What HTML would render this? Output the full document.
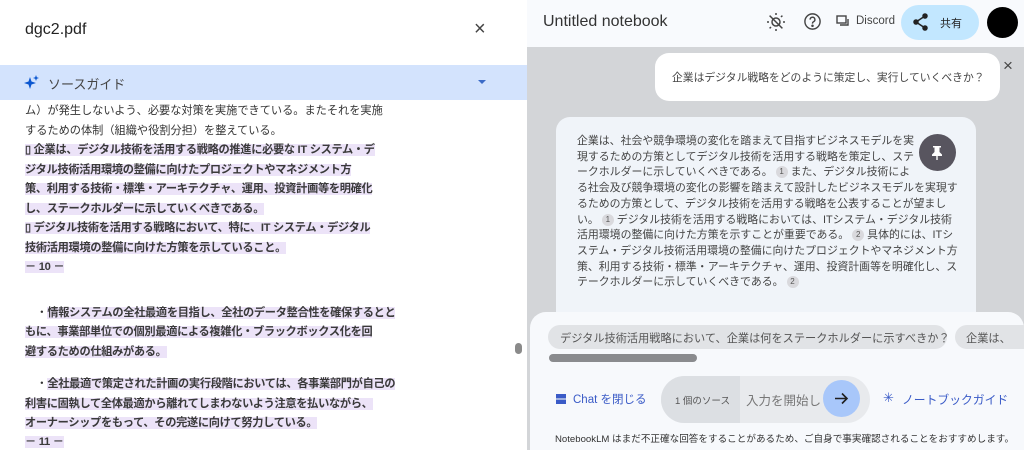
<!DOCTYPE html>
<html><head><meta charset="utf-8"><style>
*{margin:0;padding:0;box-sizing:border-box}
body{width:1024px;height:450px;overflow:hidden;position:relative;background:#fff;font-family:"Liberation Sans","Noto Sans CJK JP",sans-serif;color:#1f1f1f}
.a{position:absolute;white-space:nowrap}
.l{position:absolute;left:25px;font-size:11.2px;color:#333;line-height:19.5px;white-space:nowrap}
.h{background:#ece3f8;font-weight:bold;color:#3a3a3a;letter-spacing:-0.3px}
.r{font-size:10.9px;color:#444;line-height:15.7px}
.n{display:inline-block;width:12px;height:12px;border-radius:6px;background:#d9d9dd;font-size:8px;text-align:center;line-height:12px;color:#555;margin:0 3px;vertical-align:1px}
</style></head><body>
<div class="a" style="left:25px;top:21px;font-size:16px;color:#222">dgc2.pdf</div>
<div class="a" style="left:474px;top:18px;font-size:20px;color:#444">×</div>
<div class="a" style="left:0;top:65px;width:527px;height:35px;background:#d3e3fd"></div>
<svg class="a" style="left:24px;top:74px" width="16" height="16" viewBox="0 0 16 16"><path d="M6 3L7.5 7.5 12 9 7.5 10.5 6 15 4.5 10.5 0 9 4.5 7.5Z" fill="#0b57d0"/><path d="M12 1l.8 2.2L15 4l-2.2.8L12 7l-.8-2.2L9 4l2.2-.8Z" fill="#0b57d0"/></svg>
<div class="a" style="left:48px;top:74px;font-size:13px;color:#444">ソースガイド</div>
<div class="a" style="left:478px;top:80px;width:0;height:0;border-left:4px solid transparent;border-right:4px solid transparent;border-top:4px solid #3b6bc7"></div>

<div class="l" style="top:102px">ム）が発生しないよう、必要な対策を実施できている。またそれを実施</div>
<div class="l" style="top:122px">するための体制（組織や役割分担）を整えている。</div>
<div class="l" style="top:141px"><span class="h">▯ 企業は、デジタル技術を活用する戦略の推進に必要な IT システム・デ</span></div>
<div class="l" style="top:161px"><span class="h">ジタル技術活用環境の整備に向けたプロジェクトやマネジメント方</span></div>
<div class="l" style="top:180px"><span class="h">策、利用する技術・標準・アーキテクチャ、運用、投資計画等を明確化</span></div>
<div class="l" style="top:200px"><span class="h">し、ステークホルダーに示していくべきである。</span></div>
<div class="l" style="top:219px"><span class="h">▯ デジタル技術を活用する戦略において、特に、IT システム・デジタル</span></div>
<div class="l" style="top:239px"><span class="h">技術活用環境の整備に向けた方策を示していること。</span></div>
<div class="l" style="top:258px"><span class="h">－ 10 －</span></div>
<div class="l" style="top:304px">　・<span class="h">情報システムの全社最適を目指し、全社のデータ整合性を確保するとと</span></div>
<div class="l" style="top:323px"><span class="h">もに、事業部単位での個別最適による複雑化・ブラックボックス化を回</span></div>
<div class="l" style="top:343px"><span class="h">避するための仕組みがある。</span></div>
<div class="l" style="top:375px">　・<span class="h">全社最適で策定された計画の実行段階においては、各事業部門が自己の</span></div>
<div class="l" style="top:395px"><span class="h">利害に固執して全体最適から離れてしまわないよう注意を払いながら、</span></div>
<div class="l" style="top:414px"><span class="h">オーナーシップをもって、その完遂に向けて努力している。</span></div>
<div class="l" style="top:433px"><span class="h">－ 11 －</span></div>
<div class="a" style="left:515px;top:343px;width:7px;height:11px;border-radius:4px;background:#8a8a8a"></div>

<div class="a" style="left:527px;top:0;width:497px;height:450px;background:#d3d5d8"></div>
<div class="a" style="left:527px;top:0;width:497px;height:47px;background:#f8fafd"></div>
<div class="a" style="left:543px;top:13px;font-size:16px;color:#333">Untitled notebook</div>
<svg class="a" style="left:766px;top:12px" width="20" height="20" viewBox="0 0 20 20" fill="none" stroke="#444" stroke-width="1.5"><circle cx="10" cy="10" r="4"/><path d="M10 1v2M10 17v2M1 10h2M17 10h2M3.6 3.6l1.4 1.4M15 15l1.4 1.4M3.6 16.4L5 15M15 5l1.4-1.4M4 4l12 12"/></svg>
<svg class="a" style="left:803px;top:12px" width="19" height="19" viewBox="0 0 20 20" fill="none" stroke="#444" stroke-width="1.5"><circle cx="10" cy="10" r="8"/><path d="M7.5 8a2.5 2.5 0 1 1 3.5 2.3c-.7.3-1 .8-1 1.5v.5"/><circle cx="10" cy="14.5" r=".6" fill="#444"/></svg>
<svg class="a" style="left:836px;top:15px" width="14" height="13" viewBox="0 0 14 13" fill="none" stroke="#444" stroke-width="1.4"><rect x="1" y="1" width="9" height="7"/><path d="M4 10h8V4"/></svg>
<div class="a" style="left:856px;top:15px;font-size:11.5px;color:#444">Discord</div>
<div class="a" style="left:901px;top:5px;width:78px;height:35px;border-radius:18px;background:#c2e7ff"></div>
<svg class="a" style="left:913px;top:13px" width="16" height="18" viewBox="0 0 16 18" fill="#222" stroke="#222" stroke-width="1.5"><circle cx="12" cy="3" r="2"/><circle cx="3" cy="9" r="2"/><circle cx="12" cy="15" r="2"/><path d="M12 3L3 9l9 6" fill="none"/></svg>
<div class="a" style="left:940px;top:15px;font-size:11px;color:#222">共有</div>
<div class="a" style="left:987px;top:7px;width:31px;height:31px;border-radius:50%;background:#000"></div>

<div class="a" style="left:655px;top:53px;width:345px;height:48px;border-radius:14px;background:#fff"></div>
<div class="a" style="left:672px;top:69px;font-size:10.8px;color:#444">企業はデジタル戦略をどのように策定し、実行していくべきか？</div>
<div class="a" style="left:1003px;top:56px;font-size:17px;color:#444">×</div>

<div class="a" style="left:556px;top:117px;width:420px;height:210px;border-radius:14px;background:#f0f4f9"></div>
<div class="a r" style="left:577px;top:134px">企業は、社会や競争環境の変化を踏まえて目指すビジネスモデルを実<br>現するための方策としてデジタル技術を活用する戦略を策定し、ステ<br>ークホルダーに示していくべきである。<span class="n">1</span>また、デジタル技術によ<br>る社会及び競争環境の変化の影響を踏まえて設計したビジネスモデルを実現す<br>るための方策として、デジタル技術を活用する戦略を公表することが望まし<br>い。<span class="n">1</span>デジタル技術を活用する戦略においては、ITシステム・デジタル技術<br>活用環境の整備に向けた方策を示すことが重要である。<span class="n">2</span>具体的には、ITシ<br>ステム・デジタル技術活用環境の整備に向けたプロジェクトやマネジメント方<br>策、利用する技術・標準・アーキテクチャ、運用、投資計画等を明確化し、ス<br>テークホルダーに示していくべきである。<span class="n">2</span></div>
<div class="a" style="left:919px;top:134px;width:37px;height:37px;border-radius:50%;background:#58555f"></div>
<svg class="a" style="left:930px;top:145px" width="14" height="15" viewBox="0 0 14 15" fill="#fff"><path d="M3 1h8v1.5H9.5v4.5L12 9.5V11H7.7v4H6.3v-4H2V9.5L4.5 7V2.5H3Z"/></svg>

<div class="a" style="left:530px;top:312px;width:494px;height:138px;border-radius:16px 16px 0 0;background:#f7f9fc"></div>
<div class="a" style="left:548px;top:325px;width:399px;height:24px;border-radius:12px;background:#e1e3e6"></div>
<div class="a" style="left:560px;top:330px;font-size:11.2px;color:#555">デジタル技術活用戦略において、企業は何をステークホルダーに示すべきか？</div>
<div class="a" style="left:955px;top:325px;width:69px;height:24px;border-radius:12px 0 0 12px;background:#e1e3e6"></div>
<div class="a" style="left:966px;top:330px;font-size:11.2px;color:#555">企業は、</div>
<div class="a" style="left:549px;top:354px;width:148px;height:8px;border-radius:4px;background:#8a8b8e"></div>

<div class="a" style="left:556px;top:394px;width:10px;height:10px;border-top:4px solid #3a5bc7;border-bottom:4px solid #3a5bc7;background:#9fb0e0"></div>
<div class="a" style="left:573px;top:391px;font-size:11.5px;color:#3a5bc7">Chat を閉じる</div>
<div class="a" style="left:661px;top:376px;width:209px;height:47px;border-radius:24px;background:#e8eaed;overflow:hidden"><div style="width:79px;height:47px;background:#dcdfe3"></div></div>
<div class="a" style="left:675px;top:393px;font-size:9.5px;color:#555">1 個のソース</div>
<div class="a" style="left:746px;top:390px;font-size:12.5px;color:#777">入力を開始し</div>
<div class="a" style="left:823px;top:380px;width:37px;height:37px;border-radius:50%;background:#a8c7fa"></div>
<svg class="a" style="left:834px;top:391px" width="15" height="15" viewBox="0 0 15 15" fill="none" stroke="#1f1f1f" stroke-width="1.6"><path d="M1 7.5h12M8 2.5l5 5-5 5"/></svg>
<div class="a" style="left:883px;top:390px;font-size:13px;color:#3a5bc7">✳</div>
<div class="a" style="left:902px;top:391px;font-size:11.8px;color:#3a5bc7">ノートブックガイド</div>
<div class="a" style="left:555px;top:431px;font-size:9.6px;color:#333">NotebookLM はまだ不正確な回答をすることがあるため、ご自身で事実確認されることをおすすめします。</div>
</body></html>
